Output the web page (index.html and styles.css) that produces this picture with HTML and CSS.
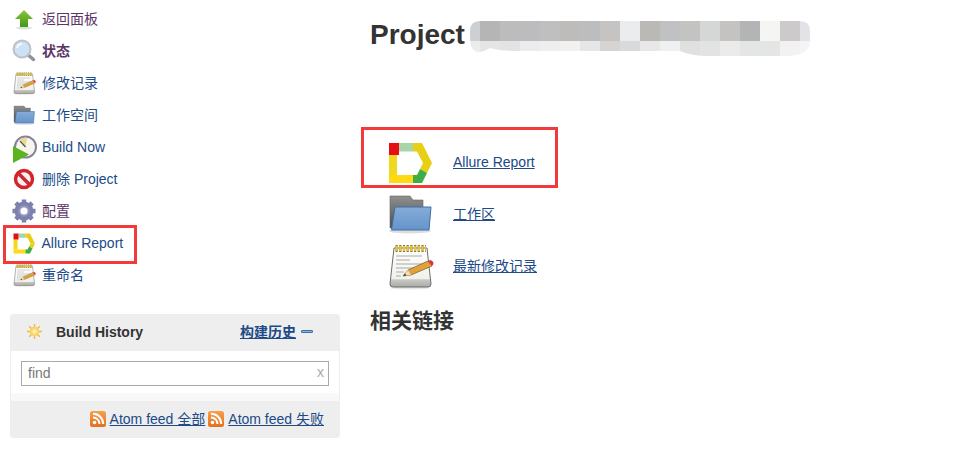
FILE: index.html
```html
<!DOCTYPE html>
<html lang="en">
<head>
    <meta charset="UTF-8">
    <meta name="viewport" content="width=device-width, initial-scale=1.0">
    <title>Project</title>
    <link rel="stylesheet" href="styles.css">
</head>
<body>
    <svg class="icon-defs" width="0" height="0">
        <defs>
            <linearGradient id="folderBack" x1="0" y1="0" x2="0" y2="1">
                <stop offset="0" stop-color="#8f8f8f"/>
                <stop offset="1" stop-color="#4d4d4d"/>
            </linearGradient>
            <linearGradient id="folderFront" x1="0" y1="0" x2="0" y2="1">
                <stop offset="0" stop-color="#86acd8"/>
                <stop offset="1" stop-color="#6594cc"/>
            </linearGradient>
            <linearGradient id="paper" x1="0" y1="0" x2="0" y2="1">
                <stop offset="0" stop-color="#ffffff"/>
                <stop offset=".8" stop-color="#f0f0ec"/>
                <stop offset=".81" stop-color="#c9c9c5"/>
                <stop offset="1" stop-color="#a9a9a5"/>
            </linearGradient>
            <linearGradient id="arrowGreen" x1="0" y1="0" x2="0" y2="1">
                <stop offset="0" stop-color="#8ac63c"/>
                <stop offset="1" stop-color="#3f9a12"/>
            </linearGradient>
            <linearGradient id="rssFill" x1="0" y1="0" x2="0" y2="1">
                <stop offset="0" stop-color="#f5a04c"/>
                <stop offset="1" stop-color="#e2701e"/>
            </linearGradient>
            <radialGradient id="sunCore">
                <stop offset="0" stop-color="#fff9c8"/>
                <stop offset="1" stop-color="#f7c948"/>
            </radialGradient>
            <radialGradient id="gearFill">
                <stop offset="0" stop-color="#c8cbe4"/>
                <stop offset="1" stop-color="#7d82ad"/>
            </radialGradient>
            <symbol id="i-allure" viewBox="0 0 48 48">
                <path d="M13 5H27V13.500H13Z" fill="#a8d5a8"/>
                <path d="M27 5H36L46 25H37L31 13.500H27Z" fill="#e8cf14"/>
                <path d="M46 25L41 35L34 31L37 25Z" fill="#e8cf14"/>
                <path d="M3 17H11V37H3Z" fill="#f0d81e"/>
                <path d="M3 37H27V45H3Z" fill="#ffd912"/>
                <path d="M27 37H31L34 31L41 35L36 45H27Z" fill="#3fae49"/>
                <path d="M3 5H13V17H3Z" fill="#e60f14"/>
            </symbol>
            <symbol id="i-folder" viewBox="0 0 48 48">
                <ellipse cx="24" cy="41" rx="21" ry="2.500" fill="#ddd"/>
                <path d="M4 6H24L27 10H37V38H4Z" fill="url(#folderBack)" stroke="#666" stroke-width=".6"/>
                <path d="M9 17H45L43 40H5.500Z" fill="url(#folderFront)" stroke="#3f6ea5"/>
            </symbol>
            <symbol id="i-notepad" viewBox="0 0 48 48">
                <ellipse cx="24" cy="46" rx="20" ry="1.500" fill="#e6e6e6"/>
                <path d="M8 6H41L45 42Q45 45 42 45H7Q4 45 4 42Z" fill="url(#paper)" stroke="#6d6d6d"/>
                <path d="M9.500 6.500H40" stroke="#8f7a1e" stroke-width="7" stroke-dasharray="2.200 1.500"/>
                <path d="M9.500 6.500H40" stroke="#e3c54a" stroke-width="5" stroke-dasharray="2.200 1.500"/>
                <path d="M10 14H36M10 18H24M10 22H36M10 26H28M10 30H18M10 34H15" stroke="#a9a9a9"/>
                <path d="M17 34L22 28L42 19L46 24L25 33Z" fill="#dfa23c" stroke="#7f5c1c" stroke-width=".7"/>
                <path d="M17 34L22 28L25 33Z" fill="#f3dcae"/>
                <path d="M17 34L19 31.500L20.500 33.400Z" fill="#333"/>
                <path d="M42 19L44.500 18Q47.500 19 47.500 22L46 24Z" fill="#d8343a"/>
            </symbol>
            <symbol id="i-rss" viewBox="0 0 16 16">
                <rect width="16" height="16" rx="2.500" fill="url(#rssFill)"/>
                <circle cx="4.500" cy="11.500" r="1.800" fill="#fff"/>
                <path d="M3 6.500A6.500 6.500 0 0 1 9.500 13M3 2.800A10.200 10.200 0 0 1 13.200 13" fill="none" stroke="#fff" stroke-width="2"/>
            </symbol>
        </defs>
    </svg>

    <div class="page">
        <aside class="side">
            <ul class="tasks">
                <li class="task">
                    <svg class="task-icon" viewBox="0 0 24 24"><ellipse cx="12" cy="21" rx="8" ry="1.500" fill="#ddd"/><path d="M12 3L21 12H16V20H8V12H3Z" fill="url(#arrowGreen)"/></svg>
                    <a class="visited" href="#">返回面板</a>
                </li>
                <li class="task">
                    <svg class="task-icon" viewBox="0 0 24 24"><path d="M15.500 15.500L21.500 20.500" stroke="#8d949c" stroke-width="3.500" stroke-linecap="round"/><circle cx="10" cy="10" r="8.500" fill="#cfe2f5" stroke="#bcc2c9" stroke-width="2"/><path d="M5 9A5 5 0 0 1 10 5" stroke="#fff" stroke-width="1.500" fill="none"/></svg>
                    <a class="visited current" href="#">状态</a>
                </li>
                <li class="task">
                    <svg class="task-icon"><use href="#i-notepad"/></svg>
                    <a href="#">修改记录</a>
                </li>
                <li class="task">
                    <svg class="task-icon"><use href="#i-folder"/></svg>
                    <a href="#">工作空间</a>
                </li>
                <li class="task">
                    <svg class="task-icon overflow" viewBox="0 0 24 24"><circle cx="13.500" cy="12" r="10.500" fill="#f7f6ee" stroke="#85849c" stroke-width="2"/><path d="M13.500 12L8 4A10 10 0 0 1 15 3Z" fill="#ecd98e"/><path d="M13.500 12L8 6" stroke="#555" stroke-width="1.200"/><path d="M1 11L17 19.500L1 28Z" fill="#5cb31e"/></svg>
                    <a href="#">Build Now</a>
                </li>
                <li class="task">
                    <svg class="task-icon" viewBox="0 0 24 24"><circle cx="12" cy="12" r="8.500" fill="#f4f2f2" stroke="#d0262c" stroke-width="3.500"/><path d="M6 6L18 18" stroke="#d0262c" stroke-width="3.500"/></svg>
                    <a href="#">删除 Project</a>
                </li>
                <li class="task">
                    <svg class="task-icon" viewBox="0 0 24 24"><path d="M12 0.500V5M12 19V23.500M0.500 12H5M19 12H23.500M3.800 3.800L7 7M17 17L20.200 20.200M3.800 20.200L7 17M17 7L20.200 3.800" stroke="#7d82ad" stroke-width="4.500"/><circle cx="12" cy="12" r="6.500" fill="none" stroke="url(#gearFill)" stroke-width="6"/></svg>
                    <a class="visited" href="#">配置</a>
                </li>
                <li class="task task-allure">
                    <svg class="task-icon"><use href="#i-allure"/></svg>
                    <a href="#">Allure Report</a>
                </li>
                <li class="task">
                    <svg class="task-icon"><use href="#i-notepad"/></svg>
                    <a href="#">重命名</a>
                </li>
            </ul>

            <section class="history">
                <div class="history-head">
                    <svg class="sun" viewBox="0 0 16 16"><path d="M8 0V16M0 8H16M2.300 2.300L13.700 13.700M2.300 13.700L13.700 2.300" stroke="#f2b84b" stroke-width="1.500"/><circle cx="8" cy="8" r="5" fill="url(#sunCore)"/></svg>
                    <span class="history-title">Build History</span>
                    <a class="history-link" href="#">构建历史</a>
                    <span class="collapse"></span>
                </div>
                <div class="history-body">
                    <div class="search">
                        <input class="search-input" type="text" value="find">
                        <span class="search-clear">x</span>
                    </div>
                </div>
                <div class="history-foot">
                    <svg class="rss"><use href="#i-rss"/></svg>
                    <a href="#">Atom feed 全部</a>
                    <svg class="rss"><use href="#i-rss"/></svg>
                    <a href="#">Atom feed 失败</a>
                </div>
            </section>
        </aside>

        <main class="main">
            <h1 class="title">Project
                <svg class="mosaic" viewBox="0 0 340 35" width="340" height="35">
                    <defs>
                        <clipPath id="mosaicClip"><path d="M10 0H330Q340 0 340 10V20Q340 33 320 35H240Q220 35 210 30H50Q30 30 20 27Q10 33 5 30Q0 28 0 15V10Q0 0 10 0Z"/></clipPath>
                    </defs>
                    <g clip-path="url(#mosaicClip)" id="mosaicCells"></g>
                </svg>
            </h1>

            <table class="links">
                <tr>
                    <td class="link-icon"><svg class="big-icon"><use href="#i-allure"/></svg></td>
                    <td><a href="#">Allure Report</a></td>
                </tr>
                <tr>
                    <td class="link-icon"><svg class="big-icon"><use href="#i-folder"/></svg></td>
                    <td><a href="#">工作区</a></td>
                </tr>
                <tr>
                    <td class="link-icon"><svg class="big-icon"><use href="#i-notepad"/></svg></td>
                    <td><a href="#">最新修改记录</a></td>
                </tr>
            </table>

            <h2 class="related">相关链接</h2>
        </main>
    </div>

    <div class="mark mark-side"></div>
    <div class="mark mark-main"></div>

    <script>
        // blurred-out project name, two rows of grey cells
        const topRow = ["#cdd0d3", "#b5b5b5", "#bcbcbc", "#bcbcbe", "#bfbfc0", "#bdbcba", "#bcbdbe", "#c5c4c2", "#ebecee", "#bbb9b6", "#bfc1c3", "#c3c3c1", "#d5d6d6", "#c4c3c1", "#b3b4b6", "#f5f5f4", "#cccacb", "#e2e3e7"];
        const bottomRow = ["#ebecec", "#e4e5e5", "#e3e3e4", "#ebecee", "#edeeef", "#f1f1f0", "#e6e6e7", "#d5d4d3", "#d9dadc", "#e8e8e9", "#eff0f1", "#e0e0e0", "#e3e3e4", "#ebebec", "#e4e6e6", "#e4e6e6", "#f2f2f1", "#f4f4f4"];
        const cells = document.getElementById("mosaicCells");

        function addRow(colors, y, height) {
            colors.forEach((color, i) => {
                const rect = document.createElementNS("http://www.w3.org/2000/svg", "rect");
                rect.setAttribute("x", i === 0 ? 0 : i * 20 - 10);
                rect.setAttribute("y", y);
                rect.setAttribute("width", i === 0 ? 10 : 20);
                rect.setAttribute("height", height);
                rect.setAttribute("fill", color);
                cells.appendChild(rect);
            });
        }

        addRow(topRow, 0, 20);
        addRow(bottomRow, 20, 15);
    </script>
</body>
</html>
```
FILE: styles.css
```css
body {
    margin: 0;
    background: white;
    color: #333;
    font-family: "Liberation Sans", "Noto Sans CJK SC", sans-serif;
    font-size: 14px;
    line-height: 16px;
    overflow: hidden;
}
a {
    color: #204a87;
}
.icon-defs {
    position: absolute;
}
.page {
    display: flex;
}
.side {
    width: 330px;
    margin-left: 10px;
    padding-top: 3px;
    flex-shrink: 0;
}
.tasks {
    list-style: none;
    margin: 0 0 23px;
    padding: 0;
}
.task {
    height: 32px;
    display: flex;
    align-items: center;
    gap: 6px;
    margin-left: 2px;
}
.task a {
    text-decoration: none;
}
.task a.visited {
    color: #5c3566;
}
.task a.current {
    font-weight: bold;
}
.task-allure a {
    margin-left: -0.5px;
}
.task-icon {
    width: 24px;
    height: 24px;
    flex-shrink: 0;
}
.overflow {
    overflow: visible;
}
.history {
    background: #eee;
    border-radius: 4px;
    width: 330px;
}
.history-head {
    height: 35px;
    padding-bottom: 2px;
    display: flex;
    align-items: center;
    padding-left: 17px;
}
.sun {
    width: 15px;
    height: 15px;
    margin-right: 14px;
}
.history-title {
    font-weight: bold;
    width: 184px;
}
.history-link {
    font-weight: bold;
}
.collapse {
    width: 12px;
    height: 3px;
    margin-left: 5px;
    background: #8fb3dc;
    border: 1px solid #3f6ea5;
    box-sizing: border-box;
    border-radius: 1px;
}
.history-body {
    background: linear-gradient(to bottom, white 84%, #f8f8f8 84%);
    margin: 0 1px;
    padding: 10px 10px 15px;
    height: 25px;
}
.search {
    position: relative;
}
.search-input {
    width: 100%;
    height: 25px;
    box-sizing: border-box;
    border: 1px solid #aaa;
    padding: 0 6px 2px;
    color: #777;
    font: 14px "Liberation Sans", sans-serif;
    display: block;
}
.search-clear {
    position: absolute;
    right: 5px;
    top: 3px;
    color: #aaa;
}
.history-foot {
    margin-top: 1px;
    height: 34px;
    padding-bottom: 2px;
    display: flex;
    align-items: center;
    justify-content: flex-end;
    padding-right: 16px;
}
.rss {
    width: 16px;
    height: 16px;
    margin: 0 4px 0 3px;
}
.main {
    margin-left: 30px;
    flex: 1;
}
.title {
    margin: 19px 0 0;
    font-size: 28px;
    line-height: 32px;
    height: 32px;
    white-space: nowrap;
}
.mosaic {
    vertical-align: -12px;
    margin-left: -3px;
}
.links {
    border-collapse: collapse;
    margin-top: 85px;
}
.links td {
    padding: 0;
    height: 52px;
}
.link-icon {
    width: 83px;
    padding-left: 16px !important;
    box-sizing: border-box;
}
.big-icon {
    width: 48px;
    height: 48px;
    display: block;
}
.related {
    margin: 14px 0 0;
    font-size: 21px;
    line-height: 30px;
}
.mark {
    position: absolute;
    border: 3px solid #f23a3a;
    box-sizing: border-box;
}
.mark-side {
    left: 3px;
    top: 225px;
    width: 134px;
    height: 39px;
}
.mark-main {
    left: 361px;
    top: 127px;
    width: 197px;
    height: 61px;
}
```
